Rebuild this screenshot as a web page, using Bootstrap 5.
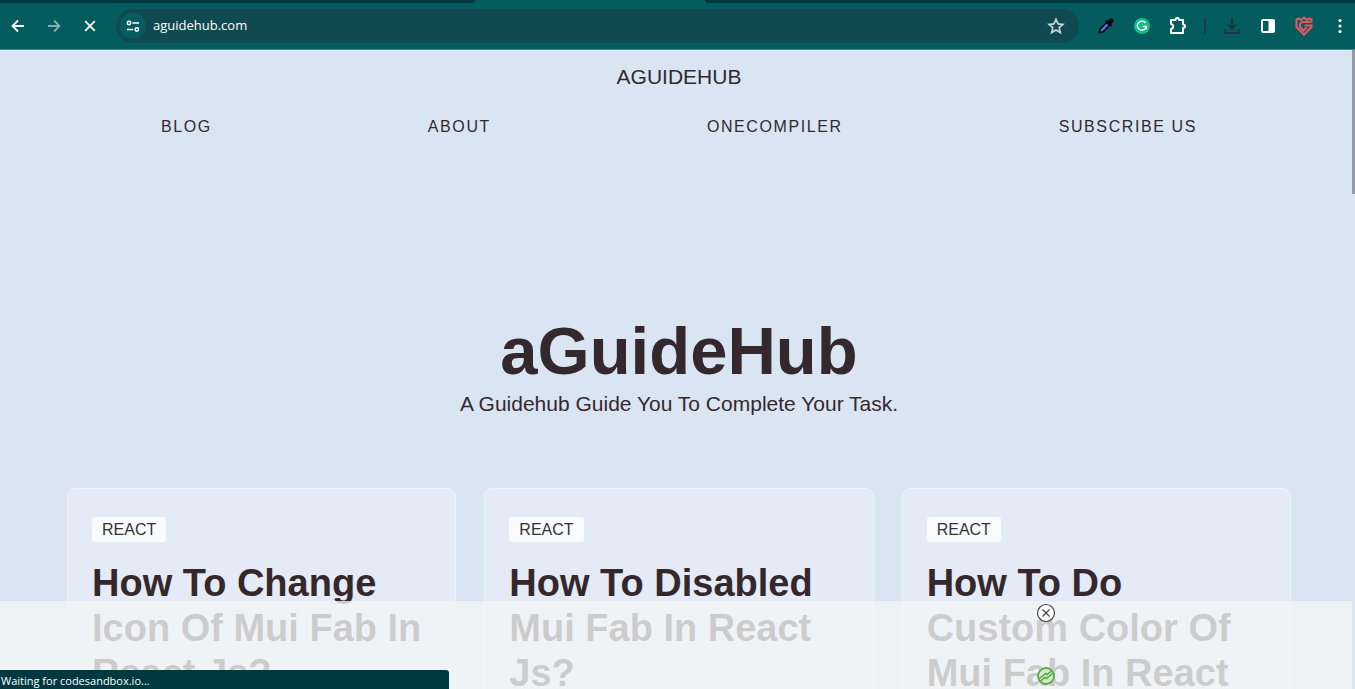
<!DOCTYPE html>
<html lang="en">
<head>
<meta charset="utf-8">
<meta name="viewport" content="width=device-width, initial-scale=1">
<title>aGuideHub</title>
<link href="https://cdn.jsdelivr.net/npm/bootstrap@5.3.0/dist/css/bootstrap.min.css" rel="stylesheet">
<style>
  body { font-family: "Liberation Sans", Arial, sans-serif; color: #35282d; background: #dae5f4; }
  a { color: inherit; text-decoration: none; }

  /* browser toolbar */
  .chrome { background: #055c5e; font-family: "Open Sans", "Noto Sans", sans-serif; }
  .tabstrip { height: 3px; background: #003a40; }
  .tab-active { width: 232px; margin-left: 35%; background: #055c5e; border-radius: 3px 3px 0 0; }
  .toolbar { height: 47px; padding: 0 5px 0 8px; border-bottom: 1px solid #4a8588; }
  .tool { width: 20px; height: 20px; padding: 0; border: 0; background: none; color: #fff; display: flex; align-items: center; justify-content: center; }
  .tool svg { display: block; }
  .omnibox { height: 34px; margin: 0 17px 0 16px; padding: 0 13px 0 4px; border-radius: 17px; background: #104950; }
  .site-info { width: 26px; height: 26px; border-radius: 50%; background: #055c5e; }
  .address { border: 0; background: none; color: #fff; font-size: 13px; padding: 0; min-width: 0; margin-left: 7px; outline: 0; }
  .divider { width: 2px; height: 16px; background: #164149; }

  /* site */
  .site { padding-left: 3px; }
  .brand { font-size: 21px; line-height: 24px; }
  .site-header { padding: 15px 50px 0; }
  .site-links { font-size: 16px; line-height: 24px; letter-spacing: .1em; margin-top: 26px; }
  .hero { padding-top: 174px; }
  .hero h1 { font-size: 67px; line-height: 76px; font-weight: 700; }
  .hero p { font-size: 21px; line-height: 24px; padding-top: 3px; }
  .posts { padding: 72px 64px 0; }
  .posts .row { --bs-gutter-x: 28px; }
  .post { background: #e4ebf6; border: 1px solid #eff4fb; border-radius: 8px; padding: 28px 24px; height: 280px; }
  .topic { background: #f9fbfe; color: #333; font-size: 16px; line-height: 25px; padding: 0 10px; border-radius: 3px; }
  .post h2 { font-size: 38px; line-height: 45px; font-weight: 700; margin-top: 19px; }

  /* items lying over the page */
  .ad-bar { height: 88px; right: 3px; background: rgba(243, 245, 245, .8); }
  .ad-close, .ad-mark { width: 20px; height: 20px; left: 77.4%; padding: 0; border: 0; background: none; }
  .ad-close { top: 2px; }
  .ad-mark { bottom: 3px; }
  .status { width: 449px; height: 19px; background: #003a40; color: #fff; font: 11px/21px "Open Sans", "Noto Sans", sans-serif; padding-left: 1px; border-top-right-radius: 3px; }
  .scroll-thumb { width: 3px; height: 144px; background: #9799a7; }
</style>
</head>
<body>
<div class="vh-100 d-flex flex-column overflow-hidden">

  <div class="chrome flex-shrink-0">
    <div class="tabstrip d-flex"><div class="tab-active"></div></div>
    <div class="toolbar d-flex align-items-center">
      <div class="d-flex gap-3">
        <button class="tool" aria-label="Back"><svg width="16" height="16" viewBox="0 0 16 16" fill="none" stroke="currentColor" stroke-width="1.800"><path d="M14 8H3M8 2.500L2.500 8 8 13.500"/></svg></button>
        <button class="tool opacity-50" aria-label="Forward"><svg width="16" height="16" viewBox="0 0 16 16" fill="none" stroke="currentColor" stroke-width="1.800"><path d="M2 8h11M8 2.500L13.500 8 8 13.500"/></svg></button>
        <button class="tool" aria-label="Stop loading"><svg width="16" height="16" viewBox="0 0 16 16" fill="none" stroke="currentColor" stroke-width="1.800"><path d="M3.200 3.200l9.600 9.600M12.800 3.200L3.200 12.800"/></svg></button>
      </div>
      <div class="omnibox flex-grow-1 d-flex align-items-center">
        <button class="tool site-info flex-shrink-0" aria-label="Site information"><svg width="14" height="14" viewBox="0 0 14 14" fill="none" stroke="currentColor" stroke-width="1.500"><circle cx="3" cy="4" r="1.700"/><path d="M6.500 4H13M1 10.500h6"/><circle cx="10.800" cy="10.500" r="1.700"/></svg></button>
        <input class="address flex-grow-1" type="text" value="aguidehub.com" aria-label="Address">
        <button class="tool flex-shrink-0" aria-label="Bookmark this page"><svg width="18" height="18" viewBox="0 0 18 18" fill="none" stroke="#c9d8dc" stroke-width="1.600"><path d="M9 2.300l2 4.600 5 .45-3.800 3.300 1.150 4.900L9 13l-4.350 2.550 1.150-4.900L2 7.350l5-.45z"/></svg></button>
      </div>
      <div class="d-flex align-items-center gap-3">
        <button class="tool" aria-label="Colour picker"><svg width="18" height="18" viewBox="0 0 18 18"><path d="M2.200 15.800l1-3.800 6.500-6.500 2.800 2.800-6.500 6.500z" fill="#5573d8" stroke="#08090f" stroke-width="1.500"/><path d="M8 4.200l2-1.500 1.200 1 2-2.200c1.300-1.200 4.400 1.500 3 3.200L14.300 6.900l.9 1.500-1.800 1.400z" fill="#08090f"/></svg></button>
        <button class="tool" aria-label="Grammar checker"><svg width="18" height="18" viewBox="0 0 18 18" fill="none"><circle cx="9" cy="9" r="8" fill="#15bd8c"/><path d="M12.500 6A4.500 4.500 0 1 0 13.300 9.500H9.800M13.300 9.500v3" stroke="#fff" stroke-width="1.300"/></svg></button>
        <button class="tool" aria-label="Extensions"><svg width="20" height="20" viewBox="0 0 20 20" fill="none" stroke="#fff" stroke-width="2" stroke-linejoin="round"><path d="M3 4h4.500c0-2.700 3.500-2.700 3.500 0h4v4.500c2.700 0 2.700 3.500 0 3.500v5H3v-4c3-.5 3-4.500 0-5z"/></svg></button>
        <div class="divider"></div>
        <button class="tool" aria-label="Downloads"><svg width="18" height="18" viewBox="0 0 18 18" fill="none" stroke="#17383f" stroke-width="2"><path d="M9 1v10M5 7.500l4 4 4-4M2 12v4h14v-4"/></svg></button>
        <button class="tool" aria-label="Side panel"><svg width="16" height="16" viewBox="0 0 16 16"><rect x="2" y="2" width="12" height="12" rx="1" fill="none" stroke="#fff" stroke-width="2"/><path d="M8.500 2H14v12H8.500z" fill="#fff"/></svg></button>
        <button class="tool" aria-label="Profile"><svg width="20" height="20" viewBox="0 0 20 20" fill="none" stroke="#ec5360" stroke-width="2"><path d="M17.500 6.500V3.500l-2.500-1-2 1.500-3-2.500L7 4 5 2.500l-2.500 1v7.500L10 18.500l7.500-7.500V9.500h-7M17 6H8l-2 2v3l3.500 3.500 3-3"/></svg></button>
        <button class="tool" aria-label="Menu"><svg width="4" height="16" viewBox="0 0 4 16" fill="#fff"><circle cx="2" cy="2.500" r="1.600"/><circle cx="2" cy="8" r="1.600"/><circle cx="2" cy="13.500" r="1.600"/></svg></button>
      </div>
    </div>
  </div>

  <div class="site flex-grow-1 position-relative overflow-hidden">
    <header class="site-header text-center">
      <a class="brand d-block" href="#">AGUIDEHUB</a>
      <nav class="site-links d-flex justify-content-around">
        <a href="#">BLOG</a><a href="#">ABOUT</a><a href="#">ONECOMPILER</a><a href="#">SUBSCRIBE US</a>
      </nav>
    </header>
    <main>
      <section class="hero text-center">
        <h1 class="mb-0">aGuideHub</h1>
        <p class="mb-0">A Guidehub Guide You To Complete Your Task.</p>
      </section>
      <section class="posts">
        <div class="row">
          <div class="col-4"><article class="post"><a class="topic d-inline-block" href="#">REACT</a><h2>How To Change Icon Of Mui Fab In React Js?</h2></article></div>
          <div class="col-4"><article class="post"><a class="topic d-inline-block" href="#">REACT</a><h2>How To Disabled Mui Fab In React Js?</h2></article></div>
          <div class="col-4"><article class="post"><a class="topic d-inline-block" href="#">REACT</a><h2>How To Do Custom Color Of Mui Fab In React</h2></article></div>
        </div>
      </section>
    </main>
    <div class="scroll-thumb position-absolute top-0 end-0"></div>
    <aside class="ad-bar position-absolute bottom-0 start-0">
      <button class="ad-close position-absolute translate-middle-x" aria-label="Close"><svg class="d-block" width="20" height="20" viewBox="0 0 20 20" fill="#fff" stroke="#444" stroke-width="1.200"><circle cx="10" cy="10" r="8.500"/><path d="M6.500 6.500l7 7M13.500 6.500l-7 7"/></svg></button>
      <a class="ad-mark position-absolute translate-middle-x" href="#" aria-label="Ad provider"><svg class="d-block" width="20" height="20" viewBox="0 0 20 20" fill="none" stroke="#58ab43" stroke-width="1.800"><circle cx="10" cy="10" r="8" fill="#d5e8d2"/><path d="M3.500 12.500l6-5 1.500 1.200L15.500 5M4.500 15l4.500-3.700 1.500 1.200 6-5" stroke-width="1.500"/></svg></a>
    </aside>
    <div class="status position-absolute bottom-0 start-0">Waiting for codesandbox.io...</div>
  </div>
</div>
<script src="https://cdn.jsdelivr.net/npm/bootstrap@5.3.0/dist/js/bootstrap.bundle.min.js"></script>
</body>
</html>
